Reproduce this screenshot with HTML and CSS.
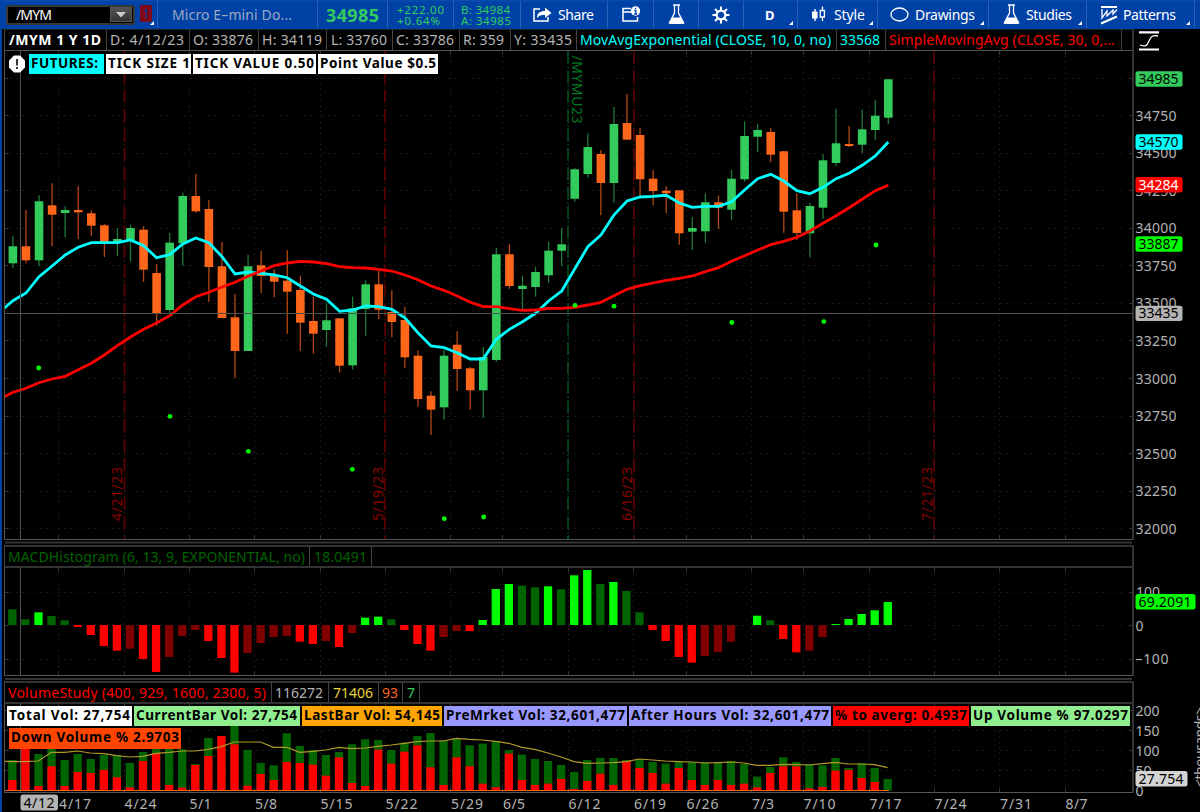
FILE: index.html
```html
<!DOCTYPE html>
<html lang="en">
<head>
    <meta charset="UTF-8">
    <title>/MYM Chart</title>
    <link rel="stylesheet" href="styles.css">
</head>
<body>
    <!-- Toolbar -->
    <div class="toolbar">
        <div class="tool symbol">
            <div class="symbol-box">
                <span data-w="36">/MYM</span>
                <div class="drop"><svg width="10" height="6"><path d="M0 0h10L5 5.5z" fill="#ccc"/></svg></div>
            </div>
            <div class="link-color">1<i class="corner"></i></div>
        </div>
        <div class="tool name"><span data-w="120">Micro E–mini Do...</span></div>
        <div class="tool last"><span data-w="53">34985</span></div>
        <div class="tool change"><span data-w="47">+222.00</span><span data-w="43">+0.64%</span></div>
        <div class="tool bidask"><span data-w="49">B: 34984</span><span data-w="50">A: 34985</span></div>
        <div class="tool share">
            <svg width="19" height="16" viewBox="0 0 19 16"><path d="M7 2H1v12h14v-4" fill="none" stroke="#fff" stroke-width="1.5"/><path d="M4 11c0-5 3-7 8-7V0.500l6.500 5.500-6.500 5V8C8.500 8 6 8.500 4 11z" fill="#fff"/></svg>
            <span data-w="36">Share</span>
        </div>
        <div class="tool window">
            <svg width="19" height="17" viewBox="0 0 19 17"><path d="M9 2.500H1v12.500h14.500v-4M1 6h8" fill="none" stroke="#fff" stroke-width="1.500"/><circle cx="13.500" cy="5" r="4.700" fill="#fff"/><path d="M13.500 1.800v1.600M12.300 4.700h1.500v3M12 8h3.200" stroke="#0041a6" stroke-width="1.300" fill="none"/></svg>
        </div>
        <div class="tool flask">
            <svg width="17" height="21" viewBox="0 0 17 21"><path d="M5 1h7M6.500 1v8L1.500 18.500h14L10.500 9V1" fill="none" stroke="#fff" stroke-width="1.300"/><path d="M4.500 13.500h8l3.500 6.500H1z" fill="#fff"/></svg>
        </div>
        <div class="tool gear">
            <svg width="18" height="18" viewBox="-9 -9 18 18"><circle r="4.400" fill="none" stroke="#fff" stroke-width="2.200"/><path d="M0-5v-3.500M0 5v3.500M-5 0h-3.500M5 0h3.500M-3.500-3.500L-6-6M3.500-3.500L6-6M-3.500 3.500L-6 6M3.500 3.500L6 6" stroke="#fff" stroke-width="2"/></svg>
        </div>
        <div class="tool period"><b>D</b><i class="corner"></i></div>
        <div class="tool style">
            <svg width="16" height="17" viewBox="0 0 16 17"><path d="M4 3v12" stroke="#fff" stroke-width="1.400"/><path d="M1 5.500h5.500v7H1z" fill="#fff"/><path d="M11.500 0.500v4M11.500 11v4M9.200 4.500h4.200v6.500H9.200z" fill="none" stroke="#fff" stroke-width="1.300"/></svg>
            <span data-w="31">Style</span><i class="corner"></i>
        </div>
        <div class="tool drawings">
            <svg width="19" height="15" viewBox="0 0 19 15"><ellipse cx="9.500" cy="7.500" rx="8.500" ry="6.500" fill="none" stroke="#fff" stroke-width="1.300"/></svg>
            <span data-w="60">Drawings</span><i class="corner"></i>
        </div>
        <div class="tool studies">
            <svg width="17" height="21" viewBox="0 0 17 21"><path d="M5 1h7M6.500 1v8L1.500 18.500h14L10.500 9V1" fill="none" stroke="#fff" stroke-width="1.300"/><path d="M4.500 13.500h8l3.500 6.500H1z" fill="#fff"/></svg>
            <span data-w="46">Studies</span><i class="corner"></i>
        </div>
        <div class="tool patterns">
            <svg width="18" height="20" viewBox="0 0 18 20"><path d="M1 2h16M1 18.500L17 11.500" stroke="#fff" stroke-width="2"/><path d="M2 4v9l5-7v5l6-6v4l4-4.500" fill="none" stroke="#fff" stroke-width="1.300"/></svg>
            <span data-w="53">Patterns</span><i class="corner"></i>
        </div>
    </div>

    <!-- Price -->
    <div class="panel">
        <div class="head price-head">
            <div class="cell title"><span data-w="92">/MYM 1 Y 1D</span></div>
            <div class="cell date"><span data-w="74">D: 4/12/23</span></div>
            <div class="cell open"><span data-w="60">O: 33876</span></div>
            <div class="cell high"><span data-w="60">H: 34119</span></div>
            <div class="cell low"><span data-w="56">L: 33760</span></div>
            <div class="cell close"><span data-w="58">C: 33786</span></div>
            <div class="cell range"><span data-w="41">R: 359</span></div>
            <div class="cell yval"><span data-w="58">Y: 33435</span></div>
            <div class="cell ema"><span data-w="251">MovAvgExponential (CLOSE, 10, 0, no)</span></div>
            <div class="cell ema-value"><span data-w="40">33568</span></div>
            <div class="cell sma"><span data-w="226">SimpleMovingAvg (CLOSE, 30, 0,...</span></div>
        </div>
        <svg class="scale-icon" width="20" height="20" viewBox="0 0 20 20"><path d="M0 1.300h20M0 18.500h20" stroke="#fff" stroke-width="2.200"/><path d="M1 14c5 2 7 1 9-4s4-6 9-5" fill="none" stroke="#fff" stroke-width="1.300"/></svg>
        <div class="plot">
            <svg id="price" width="1197" height="494" viewBox="3 51 1197 494"></svg>
            <div class="labels futures">
                <svg width="18" height="18" viewBox="0 0 18 18"><path d="M6 0.500h6l5 5v7l-5 5H6l-5-5v-7z" fill="#fff"/><path d="M9 4v6.500M9 12v2" stroke="#222" stroke-width="1.800"/></svg>
                <div class="label cyan"><span data-w="67">FUTURES:</span></div>
                <div class="label white tick-size"><span data-w="82">TICK SIZE 1</span></div>
                <div class="label white tick-value"><span data-w="119">TICK VALUE 0.50</span></div>
                <div class="label white point"><span data-w="116">Point Value $0.5</span></div>
            </div>
        </div>
    </div>

    <!-- MACD -->
    <div class="panel">
        <div class="head">
            <div class="cell macd"><span data-w="297">MACDHistogram (6, 13, 9, EXPONENTIAL, no)</span></div>
            <div class="cell macd-value"><span data-w="53">18.0491</span></div>
        </div>
        <svg id="macd" width="1197" height="113" viewBox="3 568 1197 113"></svg>
    </div>

    <!-- Volume -->
    <div class="panel">
        <div class="head">
            <div class="cell vol"><span data-w="258">VolumeStudy (400, 929, 1600, 2300, 5)</span></div>
            <div class="cell vol-value"><span data-w="48">116272</span></div>
            <div class="cell vol-avg"><span data-w="40">71406</span></div>
            <div class="cell vol-down"><span data-w="16">93</span></div>
            <div class="cell vol-up">7</div>
        </div>
        <div class="plot">
            <svg id="volume" width="1197" height="108" viewBox="3 704 1197 108"></svg>
            <div class="labels volumes">
                <div class="label white total"><span data-w="121">Total Vol: 27,754</span></div>
                <div class="label green current"><span data-w="161">CurrentBar Vol: 27,754</span></div>
                <div class="label orange lastbar"><span data-w="136">LastBar Vol: 54,145</span></div>
                <div class="label violet pre"><span data-w="179">PreMrket Vol: 32,601,477</span></div>
                <div class="label violet after"><span data-w="198">After Hours Vol: 32,601,477</span></div>
                <div class="label red averg"><span data-w="132">% to averg: 0.4937</span></div>
                <div class="label green upvol"><span data-w="155">Up Volume % 97.0297</span></div>
                <div class="label tomato downvol"><span data-w="168">Down Volume % 2.9703</span></div>
            </div>
        </div>
    </div>

    <script src="chart.js"></script>
</body>
</html>
```
FILE: styles.css
```css
* {
    box-sizing: border-box;
}

body {
    margin: 0;
    height: 812px;
    overflow: hidden;
    background: #000;
    color: #fff;
    font-family: "Noto Sans", sans-serif;
    font-size: 14px;
    line-height: 18px;
    border-left: 2px solid #0041a6;
}

span {
    white-space: nowrap;
}

svg {
    display: block;
    flex: none;
    overflow: visible;
}

/* Toolbar */
.toolbar {
    display: flex;
    height: 29px;
    margin-left: -2px;
    background: linear-gradient(#0a4cb0, #0041a6 3px);
}

.tool {
    position: relative;
    display: flex;
    align-items: center;
    flex: none;
    height: 27px;
    margin-top: 1px;
    border-right: 1px solid #2a61b8;
}

.corner {
    position: absolute;
    right: 4px;
    bottom: 3px;
    border-left: 4px solid transparent;
    border-bottom: 4px solid #fff;
}

.symbol { width: 158px; padding-left: 6px; }

.symbol-box {
    display: flex;
    align-items: center;
    justify-content: space-between;
    width: 129px;
    height: 20px;
    padding-left: 8px;
    background: #000;
    border: 2px solid #383838;
    border-radius: 3px;
}

.drop {
    display: flex;
    align-items: center;
    justify-content: center;
    width: 22px;
    height: 15px;
    margin-right: 1px;
    background: linear-gradient(#555, #333);
    border: 1px solid #555;
}

.link-color {
    position: relative;
    width: 12px;
    height: 17px;
    margin: -2px 0 0 5px;
    background: #7d0a16;
    border-radius: 2px;
    color: #0a3c9c;
    text-align: center;
}

.link-color .corner {
    right: -2px;
    bottom: -3px;
}

.name { width: 160px; padding-left: 14px; color: #9ca9c2; font-size: 14px; }
.last { width: 70px; padding-left: 8px; color: #33cc5c; font-size: 18px; font-weight: bold; }

.change,
.bidask {
    flex-direction: column;
    align-items: flex-start;
    justify-content: center;
    color: #33cc5c;
    font-size: 11.5px;
    line-height: 11px;
}

.change { width: 66px; padding-left: 9px; }
.bidask { width: 67px; padding-left: 7px; }
.share { width: 87px; padding-left: 12px; gap: 6px; }
.window { width: 46px; padding-left: 14px; }
.flask { width: 45px; padding-left: 14px; }
.gear { width: 45px; padding-left: 13px; }
.period { width: 54px; padding-left: 21px; }
.style { width: 80px; padding-left: 13px; gap: 7px; }
.drawings { width: 111px; padding-left: 12px; gap: 6px; }
.studies { width: 98px; padding-left: 14px; gap: 6px; }
.patterns { width: 108px; padding-left: 13px; gap: 5px; }

.period { font-size: 13px; }

/* Panels */
.panel {
    display: grid;
    grid-template-columns: 1132px 1fr;
    margin-left: 1px;
}

.panel > svg,
.plot {
    grid-column: 1 / 3;
}

.panel > .scale-icon {
    grid-column: 2;
    margin: 2px 0 0 4px;
}

.plot {
    position: relative;
}

.head {
    display: flex;
    height: 23px;
    width: 1130px;
    margin-left: 1px;
    border: 2px solid #333;
    border-left: 1px solid #444;
}

.price-head {
    height: 22px;
    border-top: 1px solid #222;
    border-bottom: 1px solid #555;
}

.cell {
    flex: none;
    padding-left: 3px;
    border-right: 1px solid #444;
    line-height: 19px;
    color: #b4b4b4;
}

.title { width: 102px; padding-left: 4px; color: #fff; font-weight: bold; }
.date { width: 83px; }
.open { width: 69px; }
.high { width: 68px; }
.low { width: 66px; padding-left: 4px; }
.close { width: 67px; }
.range { width: 51px; }
.yval { width: 66px; }
.ema { width: 260px; color: #0ff; }
.ema-value { width: 49px; color: #0ff; }
.sma { width: 236px; color: #f00; }

.macd { width: 305px; color: #006400; }
.macd-value { width: 62px; padding-left: 4px; color: #006400; }

.vol { width: 267px; color: #f00; }
.vol-value { width: 57px; }
.vol-avg { width: 50px; padding-left: 4px; color: #e8d43c; }
.vol-down { width: 24px; color: #ff6619; }
.vol-up { width: 17px; padding-left: 4px; color: #33cc5c; }

/* Chart labels drawn over the plots */
.labels {
    position: absolute;
    left: 4px;
    display: flex;
    flex-wrap: wrap;
    gap: 3px 2px;
}

.futures { top: 3px; left: 5px; }
.volumes { top: 2px; width: 1128px; row-gap: 2px; }
.futures > svg { margin: 1px 1px 0 0; }

.label {
    height: 20px;
    padding-left: 2px;
    color: #000;
    font-size: 13.5px;
    font-weight: bold;
    line-height: 19px;
}

.white { background: #fff; }
.cyan { width: 75px; background: #0ff; }
.green { background: #90ee90; }
.orange { background: #ffa500; }
.violet { background: #9999ff; }
.red { background: #f00; }
.tomato { background: #ff4500; }

.futures .tick-size { width: 85px; }
.tick-value { width: 123px; }
.point { width: 120px; }
.total { width: 125px; }
.current { width: 166px; }
.lastbar { width: 140px; }
.pre { width: 183px; }
.after { width: 202px; }
.averg { width: 136px; }
.upvol { width: 159px; }
.downvol { width: 172px; margin-left: 2px; height: 21px; }

/* Plots */
.axis { fill: #b4b4b4; }
.frame { stroke: #555; }
.frame-thick { stroke: #333; stroke-width: 2; }
.grid-h { stroke: #2c2c2c; stroke-dasharray: 1 5; }
.grid-v { stroke: #2c2c2c; stroke-dasharray: 1 4.5; }
.tick { stroke: #333; }
.expiry { stroke: #5c0000; stroke-width: 1.7; stroke-dasharray: 13 2.7 1 2.7; }
.contract { stroke: #004d1a; stroke-width: 1.7; stroke-dasharray: 13 2.7 1 2.7; }
.expiry-text { fill: #8b0000; }
.contract-text { fill: #007a22; }
.cross { stroke: #505050; }
.up { fill: #33cc5c; }
.up-wick { stroke: #1f7a37; stroke-width: 1.3; }
.down { fill: #ff6619; }
.down-wick { stroke: #b34712; stroke-width: 1.3; }
.ema-line { fill: none; stroke: #0ff; stroke-width: 2.8; }
.sma-line { fill: none; stroke: #f00; stroke-width: 2.8; }
.dot { fill: #0f0; }
.avg-line { fill: none; stroke: #b39a28; stroke-width: 1.2; }
.base { stroke: #ff6619; }
```
FILE: chart.js
```javascript
// [up, high, body top, body bottom, low]
const candles = [
    [1, 235.7, 246.3, 263.3, 268], [0, 210, 246.3, 260.3, 263.3], [1, 195.3, 201.3, 260.3, 266.3], [0, 183.3, 205.3, 214.7, 246.3],
    [1, 206.3, 210, 213, 237.3], [0, 186.3, 210, 212.3, 239], [0, 210.3, 213.3, 225.7, 236], [0, 223.7, 225.3, 242.7, 257],
    [1, 228.3, 239, 243, 256.3], [1, 224.7, 228, 240.7, 261.7], [0, 226.3, 229.7, 269.7, 282], [0, 264, 273, 313, 325.7],
    [1, 233, 242.7, 310, 313], [1, 192.7, 196, 243.3, 265.7], [0, 173.7, 196, 211.3, 212.7], [0, 200.3, 209, 267, 302],
    [0, 242, 266.3, 318, 318], [0, 294, 317.3, 351, 378], [1, 254.7, 266.3, 351, 351], [0, 251, 265.3, 276, 293],
    [0, 269.3, 275, 281.7, 297.3], [0, 250.3, 280.7, 291.7, 333.7], [0, 275.7, 290, 322.7, 351], [0, 296.7, 321, 333.7, 353.7],
    [1, 302.7, 320.3, 330, 346.7], [0, 318.3, 318.3, 365.7, 372.7], [1, 296.7, 308.3, 365.3, 369.3], [1, 280.3, 284.3, 309, 335.7],
    [0, 270.7, 284.3, 309.7, 319], [0, 290.3, 312, 322, 337.3], [0, 306.7, 320, 357.3, 367.7], [0, 350.3, 355.7, 399, 406.7],
    [0, 391.3, 395.7, 409.7, 435], [1, 349.7, 355.7, 407.3, 419.7], [0, 331.3, 344.7, 369, 390.7], [0, 367, 368.3, 390.3, 409.7],
    [1, 347, 357, 390.3, 417.7], [1, 248, 254.3, 360, 361.7], [0, 244, 254.3, 286, 288.7], [1, 275.7, 285.7, 289, 309],
    [1, 266.7, 272, 287, 296.7], [1, 242, 250.7, 275.3, 282.7], [1, 228, 244.3, 250.7, 266.3], [1, 168, 169.3, 198.7, 201.7],
    [1, 133.3, 147, 174, 177.7], [0, 150, 154, 183, 215.3], [1, 107, 124, 183, 202.7], [0, 94, 123, 139.7, 139.7],
    [0, 128, 135, 179.3, 196], [0, 170, 178.7, 191, 205.3], [0, 186, 190.7, 193.3, 213.3], [0, 190.3, 190.3, 233.3, 244.7],
    [1, 217, 228, 231.7, 250], [1, 193.3, 202.3, 231.3, 242.7], [0, 195.3, 202.3, 207.7, 229], [1, 170, 178.7, 209.7, 220],
    [1, 121.3, 136, 179.3, 181.7], [1, 124, 130, 136.7, 152], [0, 128.3, 132, 154.7, 162.3], [0, 151, 151.3, 211.7, 232.7],
    [0, 193.3, 210.3, 233, 240], [1, 203, 206, 233.3, 257.3], [1, 154.3, 160.3, 207.7, 219], [1, 108.7, 143.3, 163, 166],
    [0, 126, 144, 146, 147], [1, 109.7, 129.3, 144.7, 153.3], [1, 100.3, 115.7, 130, 140.3], [1, 79, 79.3, 117.7, 124]
];

const ema = [300.7, 293, 276.7, 266, 255, 247.3, 242.7, 242.7, 242.7, 240, 245.7, 257.7, 254.7, 244, 238, 242.7, 256.7,
    274, 272, 273.3, 275, 277.7, 286, 294, 299.3, 311.3, 310, 306, 306.7, 309.3, 317.7, 332.7, 346, 347.7, 352.7, 359, 359,
    339.3, 329.3, 321.7, 313.3, 301, 291, 269, 246.7, 235, 215, 201, 197, 196.3, 195.3, 203, 207.3, 206.3, 206.3, 201.7,
    190, 178.7, 174.3, 181, 190.7, 193.7, 187.3, 178.7, 173.3, 165.3, 156, 142];

const sma = [392.3, 388.3, 382.7, 379, 376.3, 369.7, 363.3, 355, 345.7, 337, 329.3, 323, 315.7, 305, 296.7, 292.3, 287,
    282.3, 276.3, 271, 265.7, 263, 261.3, 262, 263.7, 266.7, 267.7, 268, 269.3, 271, 275, 279.7, 286, 290.3, 296, 302.3,
    306.7, 306.7, 308.7, 310.3, 310, 308.3, 308.3, 307.3, 305, 302.3, 295.7, 289.3, 285.7, 283, 280.3, 278.3, 276, 271.7,
    267.7, 261.3, 255.7, 250, 244.7, 241.3, 237.3, 231, 223.3, 215.7, 207.7, 199.3, 190.7, 185.3];

const dots = [[38.7, 368], [170, 416.3], [248.3, 451.3], [352.3, 469.3], [444.3, 518.7], [483.7, 517], [575, 305.3],
    [614, 306.2], [731.8, 322.5], [823.8, 321.6], [876, 245]];

const macd = [47, 17, 38, 27, 14, -6, -30, -63, -77, -71, -102, -141, -96, -33, -15, -48, -99, -143, -84, -54, -36, -33,
    -50, -57, -48, -66, -24, 22, 25, 17, -15, -57, -77, -36, -18, -18.5, 15, 108, 123, 118, 113, 116, 107, 149, 165, 123,
    129, 102, 38, -15, -48, -96, -113, -93, -81, -50, 0, 28, 14, -42, -82, -77, -36, 3, 18, 33, 44, 69];

// [total, down part]
const volume = [
    [91, 31], [131, 131], [109, 13], [131, 72], [91, 13], [109, 55], [94, 52], [106, 61], [106, 39], [82, 9], [115, 88],
    [131, 112], [131, 16], [123, 8], [79, 76], [157, 103], [163, 163], [193, 138], [121, 14], [82, 49], [75, 31],
    [171, 85], [133, 82], [121, 77], [106, 44], [115, 99], [138, 22], [153, 13], [151, 122], [121, 80], [143, 116],
    [163, 135], [172, 69], [149, 16], [157, 99], [135, 72], [140, 20], [148, 9], [121, 110], [107, 31], [94, 16],
    [88, 20], [76, 34], [55, 4], [91, 28], [97, 50], [97, 16], [91, 88], [94, 67], [85, 52], [80, 20], [85, 67],
    [85, 31], [85, 16], [85, 31], [88, 16], [79, 20], [41, 9], [70, 52], [99, 72], [85, 72], [78, 6], [75, 10],
    [97, 59], [67, 61], [81, 37], [67, 25], [34, 0]
];

const volumeAvg = [86, 86, 88, 114, 114, 118, 112, 110, 104, 100, 102, 111, 114, 118, 118, 123, 131, 145, 145, 145, 129,
    129, 114, 117, 121, 129, 125, 127, 132, 136, 141, 146, 148, 148, 156, 153, 151, 147, 141, 129, 123, 112, 100, 86, 81,
    82, 83, 86, 94, 91, 88, 86, 85, 82, 83, 85, 82, 75, 75, 78, 77, 76, 80, 84, 79, 79, 77, 68];

const weeks = [[59, "4/17"], [124.5, "4/24"], [189.5, "5/1"], [255, "5/8"], [320.5, "5/15"], [385.5, "5/22"], [451, "5/29"],
    [503, "6/5"], [568.5, "6/12"], [634, "6/19"], [686.5, "6/26"], [752, "7/3"], [803.5, "7/10"], [869.5, "7/17"],
    [934.5, "7/24"], [1000, "7/31"], [1065.5, "8/7"]];

const LEFT = 4.5;
const RIGHT = 1133;
const STEP = 13.066;

const line = (x1, y1, x2, y2, cls) => `<line x1="${x1}" y1="${y1}" x2="${x2}" y2="${y2}" class="${cls}"/>`;
const rect = (x, y, w, h, fill) => `<rect x="${x}" y="${y}" width="${w}" height="${h}" fill="${fill}"/>`;
const text = (x, y, w, str, cls = "axis", extra = "") =>
    `<text x="${x}" y="${y}" textLength="${w}" class="${cls}" ${extra}>${str}</text>`;

function badge(x, y, w, str, fill, color = "#000") {
    return `<rect x="${x}" y="${y - 7.7}" width="${w}" height="15.400" rx="2.500" fill="${fill}"/>` +
        `<text x="${x + 3}" y="${y + 5}" textLength="${w - 7}" fill="${color}">${str}</text>`;
}

function polyline(startY, ys, x0, cls) {
    const pts = ys.map((y, i) => `${(x0 + i * STEP).toFixed(1)},${y}`).join(" ");
    return `<polyline points="${LEFT},${startY} ${pts}" class="${cls}"/>`;
}

function grid(top, bottom, rows) {
    let s = "";
    weeks.forEach(([x]) => {
        const gx = Math.ceil(x) - 0.5;
        s += line(gx, top + 5, gx, bottom - 5, "grid-v") +
            line(gx, top, gx, top + 4, "tick") + line(gx, bottom - 4, gx, bottom, "tick");
    });
    rows.forEach(y => {
        const gy = Math.floor(y) + 0.5;
        s += line(LEFT + 6, gy, RIGHT - 10, gy, "grid-h") +
            line(LEFT, gy, LEFT + 4, gy, "tick") + line(RIGHT - 4, gy, RIGHT, gy, "tick");
    });
    return s;
}

function frame(top, bottom) {
    return line(LEFT, top, LEFT, bottom, "frame") + line(RIGHT, top, RIGHT, bottom, "frame-thick") +
        line(LEFT, bottom, RIGHT, bottom, "frame");
}

function drawPrice() {
    const rows = Array.from({ length: 13 }, (_, i) => 78 + i * 37.57);
    let s = grid(51, 539, rows);

    [[124.5, "4/21/23"], [385, "5/19/23"], [634, "6/16/23"], [934, "7/21/23"]].forEach(([x, d]) => {
        s += line(x, 51, x, 539, "expiry");
        s += text(0, 0, 54, d, "expiry-text", `transform="translate(${x - 2.5} 521) rotate(-90)"`);
    });
    s += line(568, 51, 568, 539, "contract");
    s += text(0, 0, 68, "/MYMU23", "contract-text", `transform="translate(571.5 55.5) rotate(90)"`);

    candles.forEach(([up, high, top, bottom, low], i) => {
        const x = 12.9 + i * STEP;
        const cls = up ? "up" : "down";
        s += line(x, high, x, low, cls + "-wick");
        s += `<rect x="${x - 4.3}" y="${top}" width="8.600" height="${bottom - top}" class="${cls}"/>`;
    });
    s += polyline(308, ema, 12.9, "ema-line") + polyline(396.7, sma, 12.9, "sma-line");
    dots.forEach(([x, y]) => s += `<circle cx="${x}" cy="${y}" r="2.400" class="dot"/>`);

    s += line(20.5, 51, 20.5, 539, "cross") + line(LEFT, 313.5, RIGHT, 313.5, "cross");
    s += frame(51, 539.5) + line(5, 542.5, 1132, 542.5, "frame-thick");
    rows.slice(1).forEach((y, i) => s += text(1135.5, y + 5, 41, 34750 - i * 250));
    s += badge(1135.5, 79, 47, "34985", "#33cc5c");
    s += badge(1135.5, 142, 47, "34570", "#0ff");
    s += badge(1135.5, 184.700, 47, "34284", "#f00", "#fff");
    s += badge(1135.5, 244, 47, "33887", "#0f0");
    s += badge(1135.5, 313.400, 47, "33435", "#b4b4b4");
    document.getElementById("price").innerHTML = s;
}

function drawMacd() {
    let s = grid(568, 675, [592, 625, 659]);
    macd.forEach((v, i) => {
        const rising = i && v > macd[i - 1];
        const color = v > 0 ? (rising ? "#0f0" : "#006400") : (rising ? "#800000" : "#f00");
        const h = Math.abs(v) / 3;
        s += rect(8.2 + i * STEP, v > 0 ? 625 - h : 625, 8.3, h, color);
    });
    s += line(20.5, 568, 20.5, 675, "cross") + frame(567, 675.5) + line(5, 679, 1132, 679, "frame-thick");
    s += text(1136, 597, 24, "100") + text(1135.5, 630.5, 8, "0") + text(1135.5, 664, 33, "–100");
    s += badge(1135.5, 601.700, 60, "69.2091", "#0f0");
    document.getElementById("macd").innerHTML = s;
}

function drawVolume() {
    let s = grid(704, 792, [710, 730, 750, 770]);
    s += line(20.5, 704, 20.5, 792, "cross");
    volume.forEach(([total, down], i) => {
        const x = 8.2 + i * STEP;
        s += rect(x, 790.3 - total / 3, 8.3, total / 3, "#006400");
        s += rect(x, 790.3 - down / 3, 8.3, down / 3, "#f00");
    });
    s += polyline(761.3, volumeAvg.map(v => (790.3 - v / 3).toFixed(1)), 12.2, "avg-line");
    s += line(5, 790.5, 889, 790.5, "base") + frame(703, 792.5);
    s += text(1135.5, 715.5, 24, "200") + text(1135.5, 735.5, 24, "150") + text(1135.5, 755.5, 24, "100") +
        text(1135.5, 775.5, 16, "50") + text(1135.5, 795.5, 8, "0");
    s += badge(1135.5, 778.700, 52, "27.754", "#d3d3d3");
    s += text(0, 0, 80, "&lt;thousands&gt;", "axis", `transform="translate(1205 787) rotate(-90)"`);
    weeks.forEach(([x, d]) => s += text(x, 808.5, d.length * 8 - (d.length === 3 ? 2 : 0), d));
    s += `<rect x="20.500" y="794.500" width="37.500" height="16" rx="2.500" fill="#b4b4b4"/>` +
        text(23.5, 807.5, 31, "4/12", "");
    document.getElementById("volume").innerHTML = s;
}

// Space the letters so each label takes its set width
function fitLabels() {
    document.querySelectorAll("[data-w]").forEach(el => {
        const extra = el.dataset.w - el.getBoundingClientRect().width;
        el.style.letterSpacing = (extra / (el.textContent.length - 1)).toFixed(2) + "px";
    });
}

drawPrice();
drawMacd();
drawVolume();
fitLabels();
```
